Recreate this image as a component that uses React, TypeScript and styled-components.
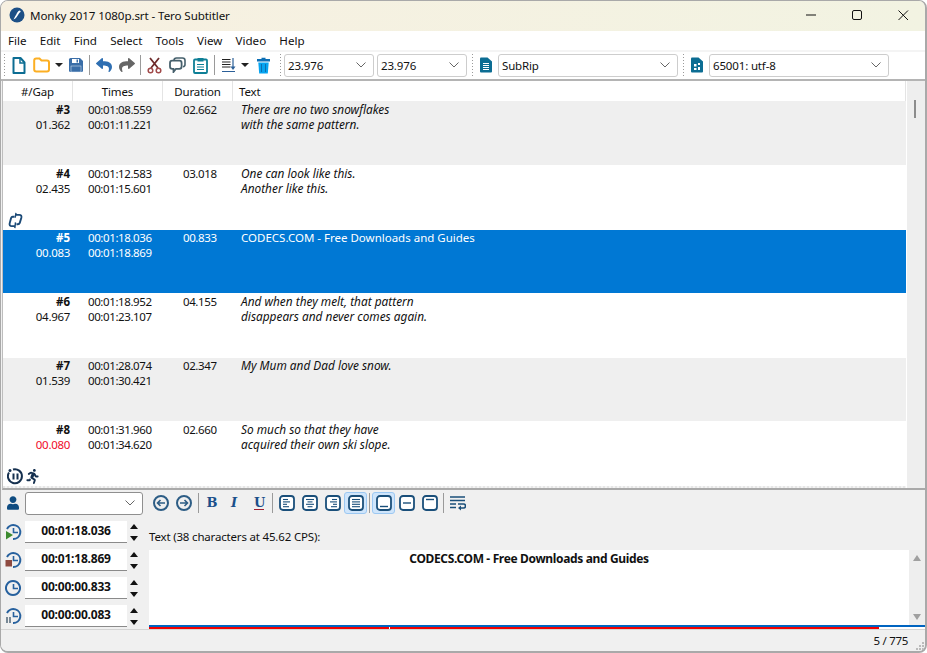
import React from "react";
import styled, { createGlobalStyle, css } from "styled-components";
import { FaReply, FaShare, FaUser, FaRunning } from "react-icons/fa";

const Global = createGlobalStyle`
  html, body { margin: 0; padding: 0; background: #fff; }
  * { box-sizing: border-box; }
`;
const FONT = `"Noto Sans", "Open Sans", sans-serif`;

const Win = styled.div`
  width: 927px; height: 653px; display: flex; flex-direction: column; overflow: hidden;
  border: 1px solid #a9a9a9; border-bottom-width: 2px; border-right-width: 2px;
  border-radius: 8px 8px 8px 8px; background: #f0f0f0;
  font: 12px/15px ${FONT}; color: #111;
`;
const TitleBar = styled.div`
  height: 30px; display: flex; align-items: center; padding: 0 0 2px 8px; margin-right: -1px; flex: none;
  background: linear-gradient(90deg, #f7f0e1, #f2f3e2);
`;
const AppLogo = styled.svg`width: 16px; height: 16px; margin-right: 5px;`;
const TitleText = styled.div`flex: 1; font-size: 11.6px; letter-spacing: -0.1px;`;
const WinButton = styled.div`width: 46px; height: 28px; display: flex; align-items: center; justify-content: center;`;
const MenuBar = styled.div`height: 19px; background: #fff; display: flex; align-items: center; padding-left: 7px; flex: none;`;
const MenuItem = styled.span`margin-right: 13.2px; font-size: 11.6px;`;

const ToolBar = styled.div`
  height: 31px; flex: none; background: #fff; display: flex; align-items: center; padding: 0 0 1px 2px;
  border-top: 2px solid #f4f4f4; border-bottom: 2px solid #b4b4b4;
`;
const Grip = styled.i<{ $l: number; $r: number }>`
  width: 1px; height: 22px; margin: 0 ${p => p.$r}px 0 ${p => p.$l}px; flex: none;
  background: repeating-linear-gradient(180deg, #9a9a9a 0 1px, transparent 1px 3px);
`;
const Sep = styled.i<{ $l: number; $r: number; $h?: number }>`
  width: 1px; height: ${p => p.$h ?? 20}px; background: #9a9a9a; flex: none; margin: 0 ${p => p.$r}px 0 ${p => p.$l}px;
`;
const Ico = styled.svg<{ $w: number; $h?: number; $m?: number }>`
  width: ${p => p.$w}px; height: ${p => p.$h ?? p.$w}px; margin-right: ${p => p.$m ?? 0}px; flex: none; display: block;
`;
const Drop = styled.i<{ $m: number }>`
  width: 0; height: 0; flex: none; margin: 0 ${p => p.$m}px 0 5px;
  border-left: 4px solid transparent; border-right: 4px solid transparent; border-top: 4px solid #222;
`;
const Combo = styled.div<{ $w: number; $m?: number; $dark?: boolean }>`
  width: ${p => p.$w}px; height: 23px; flex: none; margin-right: ${p => p.$m ?? 0}px;
  border: 1px solid ${p => (p.$dark ? "#8f8f8f" : "#cdcdcd")}; border-radius: 3px; background: #fff;
  display: flex; align-items: center; justify-content: space-between; padding: 0 6px 0 3px; font-size: 11.5px; letter-spacing: -0.15px;
`;
const Chev = () => (
  <Ico $w={12} $h={8} viewBox="0 0 12 8"><path d="M1.500 1.500 6 6l4.500-4.500" fill="none" stroke="#666" strokeWidth="1" /></Ico>
);

const List = styled.div`
  height: 409px; flex: none; position: relative; display: flex; background: #fff;
  margin-left: 1px; border-left: 1px solid #bdbdbd; border-bottom: 2px solid #a9a9a9;
`;
const ListMain = styled.div`flex: none; width: 903px; overflow: hidden;`;
const ListHead = styled.div`height: 20px; display: grid; grid-template-columns: 70px 90px 70px 1fr; background: #fff; font-size: 11.5px; letter-spacing: -0.15px;`;
const HeadCell = styled.div<{ $left?: boolean }>`
  text-align: ${p => (p.$left ? "left" : "center")}; padding: 1px 0 0 ${p => (p.$left ? 6 : 0)}px;
  border-right: 1px solid #e4e4e4; line-height: 19px;
`;
const Row = styled.div<{ $kind: "odd" | "even" | "sel"; $h: number }>`
  height: ${p => p.$h}px; display: grid; grid-template-columns: 70px 90px 70px 1fr; position: relative;
  padding-top: ${p => (p.$h === 63 ? 0 : 1)}px;
  line-height: 15px; font-size: 11.5px;
  ${p => p.$kind === "odd" && css`background: #efefef;`}
  ${p => p.$kind === "even" && css`background: #fff;`}
  ${p => p.$kind === "sel" && css`background: #0078d4; color: #fff;`}
`;
const NumCell = styled.div`text-align: right; padding-right: 3px;`;
const Num = styled.div`font-weight: 700;`;
const Gap = styled.div<{ $red?: boolean }>`letter-spacing: -0.3px; ${p => p.$red && css`color: #f00a2a;`}`;
const TimeCell = styled.div`padding-left: 15px; letter-spacing: -0.4px;`;
const DurCell = styled.div`padding-left: 20px; letter-spacing: -0.4px;`;
const TextCell = styled.div<{ $it?: boolean }>`
  padding-left: 8px;
  ${p => p.$it && css`font-style: italic; font-size: 11.85px;`}
`;
const RowIcons = styled.div`position: absolute; left: 4px; bottom: 1px; display: flex; align-items: center; gap: 1px;`;
const ListEnd = styled.div`
  height: 2px;
  background: repeating-linear-gradient(90deg, #e6e6e6 0 2px, #f4f4f4 2px 4px);
`;
const VScroll = styled.div`flex: 1; background: #eeeeee; position: relative; margin-left: 1px;`;
const Thumb = styled.div`position: absolute; left: 7px; top: 19px; width: 2px; height: 18px; background: #8c8c8c;`;

const Lower = styled.div`height: 139px; flex: none; display: flex; background: #f0f0f0; flex-direction: column;`;
const EditBar = styled.div`height: 28px; display: flex; align-items: center; padding: 0 0 2px 6px; flex: none;`;
const GlyphBtn = styled.span<{ $it?: boolean; $u?: boolean; $w: number; $l?: number }>`
  width: ${p => p.$w}px; margin-left: ${p => p.$l ?? 0}px; text-align: center; font: 700 13px/16px "DejaVu Serif", "Liberation Serif", serif; color: #1a4f8a; flex: none;
  font-style: ${p => (p.$it ? "italic" : "normal")};
  ${p => p.$u && css`border-bottom: 1px solid #a02030; line-height: 13px;`}
`;
const Toggle = styled.div<{ $on?: boolean }>`
  width: 23px; height: 22px; flex: none; display: flex; align-items: center; justify-content: center; border-radius: 3px;
  ${p => p.$on && css`background: #cfe5fb; border: 1px solid #9cc8f2;`}
`;
const EditBody = styled.div`flex: 1; display: flex; min-height: 0;`;
const TimesCol = styled.div`width: 148px; flex: none; display: flex; flex-direction: column; gap: 6px; padding: 3px 0 0 3px;`;
const TimeRow = styled.div`height: 22px; display: flex; align-items: center;`;
const TimeInput = styled.div`
  width: 102px; height: 22px; margin-left: 3px; background: #fff; border-bottom: 1px solid #8a8a8a;
  font-weight: 700; font-size: 12px; line-height: 20px; text-align: center; flex: none; letter-spacing: -0.2px;
`;
const Spin = styled.div`margin-left: 3px; display: flex; flex-direction: column; gap: 7px;`;
const Tri = styled.i<{ $down?: boolean }>`
  display: block; width: 0; height: 0; border-left: 4px solid transparent; border-right: 4px solid transparent;
  ${p => (p.$down ? css`border-top: 5px solid #111;` : css`border-bottom: 5px solid #111;`)}
`;
const TextCol = styled.div`flex: 1; display: flex; flex-direction: column; min-width: 0;`;
const TextLabel = styled.div`height: 32px; padding-top: 11px; line-height: 16px; font-size: 11.5px; flex: none; letter-spacing: -0.18px;`;
const TextBox = styled.div`height: 75px; flex: none; display: flex; background: #fff;`;
const TextArea = styled.div`flex: 1; text-align: center; font-weight: 700; font-size: 12px; line-height: 15px; padding-top: 1px; letter-spacing: -0.35px;`;
const BoxScroll = styled.div`width: 16px; background: #eee; display: flex; flex-direction: column; justify-content: space-between; align-items: center; padding: 5px 0;`;
const ScrollTri = styled.i<{ $down?: boolean }>`
  display: block; width: 0; height: 0; border-left: 4.500px solid transparent; border-right: 4.500px solid transparent;
  ${p => (p.$down ? css`border-top: 6px solid #a0a0a0;` : css`border-bottom: 6px solid #a0a0a0;`)}
`;
const BlueBar = styled.div`height: 2px; background: #0064c0; flex: none;`;
const RedBar = styled.div`height: 2px; background: linear-gradient(90deg, #f00000 240px, #fff 240px, #fff 241px, #f00000 241px, #f00000 730px, #fff 730px); flex: none;`;
const Status = styled.div`
  flex: 1; border-top: 1px solid #d4d4d4; background: #f0f0f0; display: flex; align-items: center; justify-content: flex-end;
  padding-right: 17px; font-size: 11.5px; position: relative; letter-spacing: -0.3px;
`;
const SizeGrip = styled.svg`position: absolute; right: 0; bottom: 0; width: 10px; height: 10px;`;

const rows = [
  { k: "odd", n: "#3", g: "01.362", t1: "00:01:08.559", t2: "00:01:11.221", d: "02.662", x: ["There are no two snowflakes", "with the same pattern."], it: true, h: 64 },
  { k: "even", n: "#4", g: "02.435", t1: "00:01:12.583", t2: "00:01:15.601", d: "03.018", x: ["One can look like this.", "Another like this."], it: true, h: 65, ic: "link" },
  { k: "sel", n: "#5", g: "00.083", t1: "00:01:18.036", t2: "00:01:18.869", d: "00.833", x: ["CODECS.COM - Free Downloads and Guides"], h: 63 },
  { k: "even", n: "#6", g: "04.967", t1: "00:01:18.952", t2: "00:01:23.107", d: "04.155", x: ["And when they melt, that pattern", "disappears and never comes again."], it: true, h: 65 },
  { k: "odd", n: "#7", g: "01.539", t1: "00:01:28.074", t2: "00:01:30.421", d: "02.347", x: ["My Mum and Dad love snow."], it: true, h: 63 },
  { k: "even", n: "#8", g: "00.080", t1: "00:01:31.960", t2: "00:01:34.620", d: "02.660", x: ["So much so that they have", "acquired their own ski slope."], it: true, h: 65, ic: "pause", red: true },
] as const;

const NAVY = "#1a4f7a";
const Lines = ({ segs }: { segs: [number, number][] }) => (
  <Ico $w={16} viewBox="0 0 16 16">
    <rect x="1" y="1" width="14" height="14" rx="3" fill="#fff" stroke={NAVY} strokeWidth="1.800" />
    {segs.map(([a, b], i) => (
      <path key={i} d={`M${a} ${4.5 + i * 2.4}H${b}`} stroke={NAVY} strokeWidth="1.100" />
    ))}
  </Ico>
);
const Pos = ({ y }: { y: number }) => (
  <Ico $w={16} viewBox="0 0 16 16">
    <rect x="1" y="1" width="14" height="14" rx="3" fill="#fff" stroke={NAVY} strokeWidth="1.800" />
    <path d={`M4 ${y}H12`} stroke={NAVY} strokeWidth="1.400" />
  </Ico>
);
const Clock = ({ badge }: { badge?: "play" | "stop" | "pause" }) => (
  <Ico $w={18} viewBox="0 0 18 18">
    <path d={badge ? "M3 6A7 7 0 1 1 9 16" : "M9 2a7 7 0 1 0 .01 0Z"} fill="none" stroke="#27619e" strokeWidth="2" />
    <path d="M9.500 5v4.500H14" fill="none" stroke="#27619e" strokeWidth="1.600" />
    {badge === "play" && <path d="M2 8l7 4-7 4.500z" fill="#3c8a2e" />}
    {badge === "stop" && <rect x="1.500" y="9" width="6.500" height="6.500" fill="#8e4a40" />}
    {badge === "pause" && <path d="M3 10v6M6 10v6" stroke="#5a6f80" strokeWidth="1.600" />}
  </Ico>
);

export default function App() {
  return (
    <Win>
      <Global />
      <TitleBar>
        <AppLogo viewBox="0 0 16 16">
          <circle cx="8" cy="8" r="7.500" fill="#1c4f86" />
          <path d="M10.500 3.500c1 .3 1.500 1 1 1.600-1.400.7-2.300 3-3.800 5-.8 1-1.700 1.900-3.200 2.300 1-1.500 1.600-3.200 2.800-5 .9-1.700 1.800-3.600 3.200-3.900z" fill="#fff" />
        </AppLogo>
        <TitleText>Monky 2017 1080p.srt - Tero Subtitler</TitleText>
        <WinButton><Ico $w={12} viewBox="0 0 12 12"><path d="M1 6h10" stroke="#111" strokeWidth="1" /></Ico></WinButton>
        <WinButton><Ico $w={12} viewBox="0 0 12 12"><rect x="1.500" y="1.500" width="9" height="9" rx="1.500" fill="none" stroke="#111" /></Ico></WinButton>
        <WinButton><Ico $w={12} viewBox="0 0 12 12"><path d="M1.500 1.500l9.500 9.500M11 1.500 1.500 11" stroke="#111" /></Ico></WinButton>
      </TitleBar>
      <MenuBar>
        {["File", "Edit", "Find", "Select", "Tools", "View", "Video", "Help"].map(m => <MenuItem key={m}>{m}</MenuItem>)}
      </MenuBar>
      <ToolBar>
        <Grip $l={1} $r={7} />
        <Ico $w={14} $h={17} $m={7} viewBox="0 0 14 17"><path d="M1.500 1h7l4 4.500V16h-11z" fill="#fff" stroke="#0c6d93" strokeWidth="2" strokeLinejoin="round" /><path d="M8 1v5h4.500" fill="none" stroke="#0c6d93" strokeWidth="1.500" /></Ico>
        <Ico $w={17} $h={16} viewBox="0 0 17 16"><path d="M1.200 3.500q0-2 2-2h3.300l2 2h5.500q2 0 2 2v7q0 2-2 2h-10.800q-2 0-2-2z" fill="#fff" stroke="#fcaf24" strokeWidth="2" /></Ico>
        <Drop $m={5} />
        <Ico $w={16} $m={5} viewBox="0 0 16 16"><path d="M1 2.500Q1 1 2.500 1H12l3 3v9.500Q15 15 13.500 15h-11Q1 15 1 13.500z" fill="#3a6ea8" /><rect x="4" y="2" width="7" height="4" fill="#fff" /><rect x="8.500" y="2.500" width="1.500" height="3" fill="#3a6ea8" /><rect x="3" y="9" width="10" height="6" fill="#3a6ea8" stroke="#eaf1f8" strokeWidth=".5" /></Ico>
        <Sep $l={0} $r={6} />
        <Ico as={FaReply} $w={16} $m={7} color="#2f6fb2" />
        <Ico as={FaShare} $w={16} $m={5} color="#666" />
        <Sep $l={0} $r={6} />
        <Ico $w={15} $h={17} $m={7} viewBox="0 0 15 17"><path d="M3 1l8 10M12 1L4 11" stroke="#6e2b2b" strokeWidth="1.800" /><circle cx="3.500" cy="13.500" r="2.300" fill="none" stroke="#a14a4a" strokeWidth="1.500" /><circle cx="11.500" cy="13.500" r="2.300" fill="none" stroke="#a14a4a" strokeWidth="1.500" /></Ico>
        <Ico $w={17} $h={16} $m={7} viewBox="0 0 17 16"><path d="M5 3.500q0-2.500 2.500-2.500h6q2.500 0 2.500 2.500v4q0 2-2 2.300" fill="none" stroke="#46606c" strokeWidth="1.600" /><path d="M1 6q0-2.300 2.300-2.300h7q2.300 0 2.300 2.300v3.500q0 2.300-2.300 2.300H7L4.500 15v-3.200h-1.200Q1 11.800 1 9.500z" fill="#fff" stroke="#46606c" strokeWidth="1.800" /></Ico>
        <Ico $w={15} $h={17} $m={6} viewBox="0 0 15 17"><rect x="1" y="2.500" width="13" height="13.500" rx="1" fill="#fff" stroke="#0e7f96" strokeWidth="1.800" /><rect x="4.500" y="1" width="6" height="3.500" fill="#0e7f96" /><path d="M4 7.500h7M4 10h7M4 12.500h7" stroke="#0e7f96" strokeWidth="1.200" /></Ico>
        <Sep $l={0} $r={6} />
        <Ico $w={15} $h={17} viewBox="0 0 15 17"><path d="M1 2.500h8.500M1 5h8.500M1 7.500h8.500M1 10h8.500" stroke="#222" strokeWidth="1" /><path d="M1 14.500h13" stroke="#2b5f98" strokeWidth="1.200" /><path d="M12 1v10" stroke="#2b5f98" strokeWidth="1.200" /><path d="M9.500 9.500 12 13l2.500-3.500z" fill="#2b5f98" /></Ico>
        <Drop $m={7} />
        <Ico $w={15} $h={17} $m={9} viewBox="0 0 15 17"><path d="M5.500 2V.8h4V2H14v2.500H1V2z" fill="#0d6fb5" /><path d="M2.300 5.500h10.400L11.800 16.500H3.200z" fill="#06a4f0" /><path d="M5.500 7v8M9.500 7v8" stroke="#0b6fb0" strokeWidth="1" /></Ico>
        <Grip $l={0} $r={3} />
        <Combo $w={90} $m={3}>23.976<Chev /></Combo>
        <Combo $w={90} $m={5}>23.976<Chev /></Combo>
        <Grip $l={0} $r={7} />
        <Ico $w={12} $h={16} $m={6} viewBox="0 0 12 16"><path d="M0 1.500Q0 .5 1 .5h6.500L12 4.500v10q0 1-1 1H1q-1 0-1-1z" fill="#0c6d93" /><path d="M3 6.500h6M3 8.500h6M3 10.500h6M3 12.500h6" stroke="#fff" strokeWidth="1" /></Ico>
        <Combo $w={180} $m={5}>SubRip<Chev /></Combo>
        <Grip $l={0} $r={7} />
        <Ico $w={12} $h={16} $m={6} viewBox="0 0 12 16"><path d="M0 1.500Q0 .5 1 .5h6.500L12 4.500v10q0 1-1 1H1q-1 0-1-1z" fill="#0c6d93" /><path d="M3 7h2.500v2.500H3zM7 6h2v2H7zM3 11h2.500v2H3zM7 10h2v3H7z" fill="#fff" /></Ico>
        <Combo $w={180}>65001: utf-8<Chev /></Combo>
      </ToolBar>
      <List>
        <ListMain>
          <ListHead>
            <HeadCell>#/Gap</HeadCell>
            <HeadCell>Times</HeadCell>
            <HeadCell>Duration</HeadCell>
            <HeadCell $left>Text</HeadCell>
          </ListHead>
          {rows.map(r => (
            <Row key={r.n} $kind={r.k} $h={r.h}>
              <NumCell><Num>{r.n}</Num><Gap $red={"red" in r}>{r.g}</Gap></NumCell>
              <TimeCell><div>{r.t1}</div><div>{r.t2}</div></TimeCell>
              <DurCell>{r.d}</DurCell>
              <TextCell $it={"it" in r}>{r.x.map(l => <div key={l}>{l}</div>)}</TextCell>
              {"ic" in r && r.ic === "link" && (
                <RowIcons>
                  <Ico $w={17} viewBox="0 0 18 18">
                    <path d="M8 5H6Q4.800 5 4.300 6.500L2.800 12Q2.300 15 5 15H8.500" fill="none" stroke="#1b4a77" strokeWidth="2" />
                    <path d="M9.500 3H13Q15.800 3 15.200 6L13.500 11.500Q13 13 11.500 13H10" fill="none" stroke="#1b4a77" strokeWidth="2" />
                    <path d="M9.500 1 8.700 6M9 11l-.7 6" stroke="#1b4a77" strokeWidth="1.500" />
                  </Ico>
                </RowIcons>
              )}
              {"ic" in r && r.ic === "pause" && (
                <RowIcons>
                  <Ico $w={17} viewBox="0 0 17 17">
                    <path d="M6 1.500A7 7 0 1 1 2 4.500" fill="none" stroke="#15304f" strokeWidth="2" />
                    <circle cx="3" cy="2.500" r="1.500" fill="#15304f" />
                    <path d="M6.500 5.500v6M10.500 5.500v6" stroke="#15304f" strokeWidth="2" />
                  </Ico>
                  <Ico as={FaRunning} $w={15} color="#15304f" />
                </RowIcons>
              )}
            </Row>
          ))}
          <ListEnd />
        </ListMain>
        <VScroll><Thumb /></VScroll>
      </List>
      <Lower>
        <EditBar>
          <Ico as={FaUser} $w={12} $h={14} $m={6} color="#0f4c81" />
          <Combo $w={118} $m={10} $dark><span /><Chev /></Combo>
          <Ico $w={16} $m={7} viewBox="0 0 16 16"><circle cx="8" cy="8" r="7" fill="none" stroke="#2d5d85" strokeWidth="2" /><path d="M12 8H5M7.500 5 4.500 8l3 3" fill="none" stroke="#2d5d85" strokeWidth="1.600" /></Ico>
          <Ico $w={16} $m={6} viewBox="0 0 16 16"><circle cx="8" cy="8" r="7" fill="none" stroke="#2d5d85" strokeWidth="2" /><path d="M4 8h7M8.500 5l3 3-3 3" fill="none" stroke="#2d5d85" strokeWidth="1.600" /></Ico>
          <Sep $l={0} $r={6} $h={20} />
          <GlyphBtn $w={14}>B</GlyphBtn>
          <GlyphBtn $it $w={14} $l={8}>I</GlyphBtn>
          <GlyphBtn $u $w={10} $l={13}>U</GlyphBtn>
          <Sep $l={8} $r={2} $h={20} />
          <Toggle><Lines segs={[[4, 9], [4, 11], [4, 8], [4, 10]]} /></Toggle>
          <Toggle><Lines segs={[[4, 12], [5.500, 10.500], [4, 12], [5.500, 10.500]]} /></Toggle>
          <Toggle><Lines segs={[[7, 12], [5, 12], [8, 12], [6, 12]]} /></Toggle>
          <Toggle $on><Lines segs={[[4, 12], [4, 12], [4, 12], [4, 12]]} /></Toggle>
          <Sep $l={2} $r={2} $h={20} />
          <Toggle $on><Pos y={11.5} /></Toggle>
          <Toggle><Pos y={8} /></Toggle>
          <Toggle><Pos y={4.5} /></Toggle>
          <Sep $l={2} $r={6} $h={20} />
          <Ico $w={16} viewBox="0 0 16 16"><path d="M0 2h15M0 5.500h15M0 9h6M0 12.500h6" stroke={NAVY} strokeWidth="1.600" /><path d="M8 9h5.500q2 0 2 2t-2 2H9" fill="none" stroke={NAVY} strokeWidth="1.600" /><path d="M11 10.500 8 13l3 2.500z" fill={NAVY} /></Ico>
        </EditBar>
        <EditBody>
          <TimesCol>
            {([["00:01:18.036", "play"], ["00:01:18.869", "stop"], ["00:00:00.833", undefined], ["00:00:00.083", "pause"]] as const).map(([t, b]) => (
              <TimeRow key={t}>
                <Clock badge={b} />
                <TimeInput>{t}</TimeInput>
                <Spin><Tri /><Tri $down /></Spin>
              </TimeRow>
            ))}
          </TimesCol>
          <TextCol>
            <TextLabel>Text (38 characters at 45.62 CPS):</TextLabel>
            <TextBox>
              <TextArea>CODECS.COM - Free Downloads and Guides</TextArea>
              <BoxScroll><ScrollTri /><ScrollTri $down /></BoxScroll>
            </TextBox>
            <BlueBar />
            <RedBar />
          </TextCol>
        </EditBody>
      </Lower>
      <Status>
        5 / 775
        <SizeGrip viewBox="0 0 10 10"><path d="M7 1h2v2H7zM4 4h2v2H4zM7 4h2v2H7zM1 7h2v2H1zM4 7h2v2H4zM7 7h2v2H7z" fill="#bbb" /></SizeGrip>
      </Status>
    </Win>
  );
}
